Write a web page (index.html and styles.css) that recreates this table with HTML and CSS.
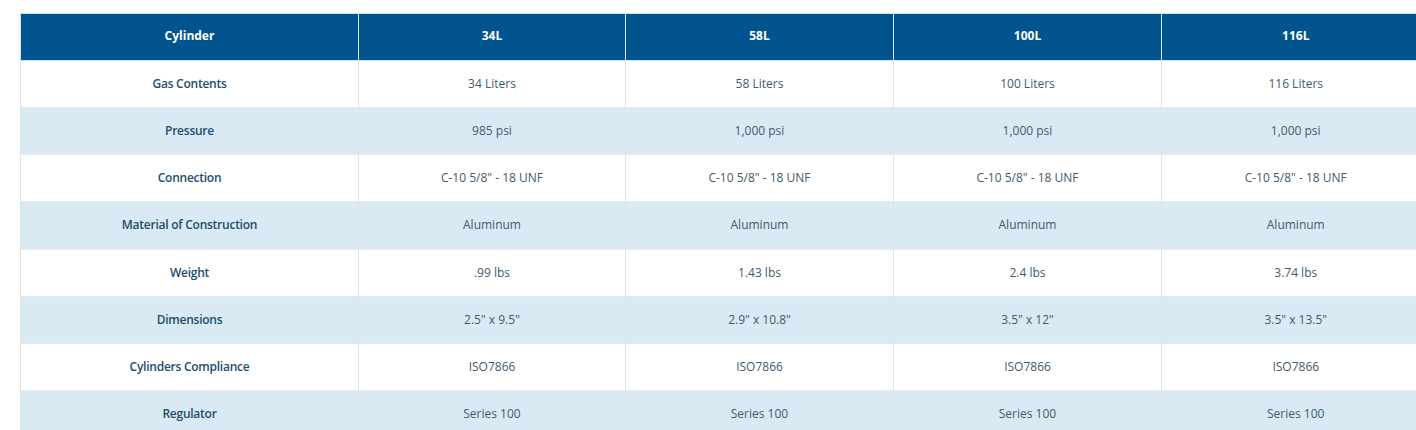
FILE: index.html
```html
<!DOCTYPE html>
<html lang="en">
<head>
<meta charset="utf-8">
<title>Cylinder Specifications</title>
<link rel="stylesheet" href="styles.css">
</head>
<body>
<div class="wrap">
<table class="spec">
  <colgroup>
    <col class="c-label">
    <col class="c-34">
    <col class="c-58">
    <col class="c-100">
    <col class="c-116">
  </colgroup>
  <thead>
    <tr>
      <th>Cylinder</th>
      <th>34L</th>
      <th>58L</th>
      <th>100L</th>
      <th>116L</th>
    </tr>
  </thead>
  <tbody>
    <tr><td class="label">Gas Contents</td><td>34 Liters</td><td>58 Liters</td><td>100 Liters</td><td>116 Liters</td></tr>
    <tr><td class="label">Pressure</td><td>985 psi</td><td>1,000 psi</td><td>1,000 psi</td><td>1,000 psi</td></tr>
    <tr><td class="label">Connection</td><td>C-10 5/8" - 18 UNF</td><td>C-10 5/8" - 18 UNF</td><td>C-10 5/8" - 18 UNF</td><td>C-10 5/8" - 18 UNF</td></tr>
    <tr><td class="label">Material of Construction</td><td>Aluminum</td><td>Aluminum</td><td>Aluminum</td><td>Aluminum</td></tr>
    <tr><td class="label">Weight</td><td>.99 lbs</td><td>1.43 lbs</td><td>2.4 lbs</td><td>3.74 lbs</td></tr>
    <tr><td class="label">Dimensions</td><td>2.5" x 9.5"</td><td>2.9" x 10.8"</td><td>3.5" x 12"</td><td>3.5" x 13.5"</td></tr>
    <tr><td class="label">Cylinders Compliance</td><td>ISO7866</td><td>ISO7866</td><td>ISO7866</td><td>ISO7866</td></tr>
    <tr><td class="label">Regulator</td><td>Series 100</td><td>Series 100</td><td>Series 100</td><td>Series 100</td></tr>
  </tbody>
</table>
</div>
</body>
</html>
```

FILE: styles.css
```css
html, body {
  margin: 0;
  padding: 0;
  background: #ffffff;
  overflow: hidden;
}

.wrap {
  padding: 13px 0 0 20px;
  width: 1409px;
}

.spec {
  width: 1409px;
  border-collapse: collapse;
  table-layout: fixed;
  font-family: "Open Sans", "Noto Sans", sans-serif;
  font-size: 12px;
}

.c-label { width: 338px; }
.c-34 { width: 267px; }
.c-58, .c-100, .c-116 { width: 268px; }

.spec th {
  background: #02548f;
  color: #ffffff;
  font-weight: 700;
  height: 43px;
  padding: 0 0 3px 0;
  text-align: center;
  border-top: 1px solid #c9e5f4;
  border-bottom: 1px solid #c9e5f4;
  border-left: 1px solid #d4e9f5;
}

.spec td {
  height: 45.15px;
  padding: 0 0 1px 0;
  text-align: center;
  color: #3f5b6e;
  border-bottom: 1px solid #e3ebf0;
  border-left: 1px solid #dfe3e6;
}

.spec tbody tr:nth-child(even) td {
  background: #d9eaf4;
}

.spec td.label {
  color: #1d4d6e;
  font-weight: 600;
  letter-spacing: -0.25px;
}
```
